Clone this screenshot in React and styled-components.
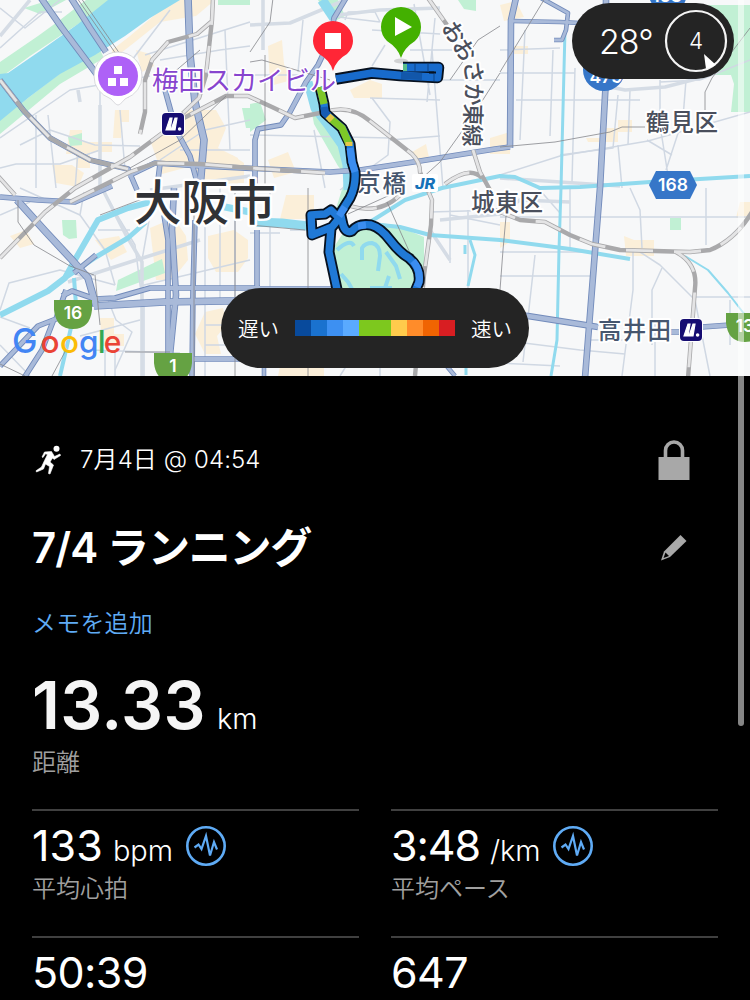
import React from 'react';
import styled, { createGlobalStyle } from 'styled-components';

const GlobalStyle = createGlobalStyle`
  html, body {
    margin: 0;
    background: #000;
  }

  * {
    box-sizing: border-box;
  }
`;

const Screen = styled.div`
  position: relative;
  width: 750px;
  height: 1000px;
  overflow: hidden;
  background: #000;
  color: #fff;
  font-family: Inter, "Noto Sans CJK JP", sans-serif;
`;

const MapArea = styled.div`
  position: relative;
  height: 376px;
  overflow: hidden;
`;

const MapSvg = styled.svg`
  display: block;
  width: 750px;
  height: 376px;
  font-family: "Noto Sans CJK JP", sans-serif;
`;

const Road = styled.path`
  fill: none;
  stroke: ${props => props.$color || '#d0d8e3'};
  stroke-width: ${props => props.$width || 2};
  stroke-dasharray: ${props => props.$dash || 'none'};
  stroke-linejoin: round;
`;

const Place = styled.text`
  fill: ${props => props.$color || '#4a4f5c'};
  font-size: ${props => props.$size || 23.5}px;
  font-weight: ${props => props.$weight || 500};
  paint-order: stroke;
  stroke: #fff;
  stroke-width: ${props => props.$halo || 4}px;
  stroke-linejoin: round;
`;

const ShieldText = styled.text`
  fill: #fff;
  font-family: Inter, sans-serif;
  font-size: 17.5px;
  font-weight: 600;
  text-anchor: middle;
`;

const GoogleText = styled.text`
  font-family: Inter, sans-serif;
  font-size: 31.5px;
  font-weight: 550;
`;

const JrText = styled.text`
  font-family: Inter, sans-serif;
  font-size: 14px;
  font-style: italic;
  font-weight: 800;
  fill: #1672b8;
`;

const Weather = styled.div`
  position: absolute;
  top: 3px;
  right: 16px;
  display: flex;
  align-items: center;
  justify-content: space-between;
  width: 162px;
  height: 76px;
  padding: 0 6px 0 27px;
  border-radius: 38px;
  background: #242424;
`;

const Temperature = styled.span`
  font-size: 34px;
  font-weight: 350;
  letter-spacing: -1px;
`;

const Wind = styled.svg`
  display: block;
  width: 64px;
  height: 64px;
`;

const Legend = styled.div`
  position: absolute;
  left: 221px;
  bottom: 8px;
  display: flex;
  align-items: center;
  justify-content: center;
  width: 308px;
  height: 80px;
  gap: 16px;
  border-radius: 40px;
  background: #242424;
  font-size: 20.5px;
  font-weight: 350;
`;

const Scale = styled.div`
  display: flex;
`;

const Swatch = styled.i`
  width: 16px;
  height: 16px;
  background: ${props => props.$color};
`;

const Details = styled.div`
  padding: 60px 32px 0;
`;

const Row = styled.div`
  display: flex;
  align-items: center;
  justify-content: space-between;
  height: ${props => props.$height}px;
  padding-right: 28px;
`;

const DateLine = styled.div`
  display: flex;
  align-items: center;
  gap: 16px;
  height: 46px;
  line-height: 24px;
  font-size: 24px;
  font-weight: 350;
  letter-spacing: 0.1px;
`;

const TitleRow = styled(Row)`
  margin-top: 34px;
`;

const Title = styled.h1`
  margin: 0;
  font-size: 42px;
  font-weight: 600;
  line-height: 60px;
  letter-spacing: -0.9px;

  > span {
    letter-spacing: -1.2px;
  }
`;

const Memo = styled.div`
  margin-top: 30px;
  line-height: 32px;
  font-size: 24px;
  font-weight: 350;
  letter-spacing: 0.2px;
  color: #5fabf5;
`;

const Distance = styled.div`
  display: flex;
  align-items: baseline;
  gap: 11px;
  height: 66px;
  margin-top: 32px;
  line-height: 66px;
  font-size: 66px;
  font-weight: 600;
  letter-spacing: 0.4px;
  color: #f5f5f5;
`;

const Unit = styled.span`
  font-size: 29px;
  font-weight: 350;
  line-height: 1;
  letter-spacing: -0.1px;
  color: #fff;
`;

const Label = styled.div`
  margin-top: ${props => props.$top}px;
  line-height: 32px;
  font-size: 24px;
  font-weight: 350;
  color: #a0a0a0;
`;

const Stats = styled.div`
  display: grid;
  grid-template-columns: 327px 327px;
  column-gap: 32px;
  grid-auto-rows: 127px;
  margin-top: 30px;
`;

const Stat = styled.div`
  padding-top: 13px;
  border-top: 2px solid #404040;
`;

const Value = styled.div`
  display: flex;
  align-items: baseline;
  gap: 10px;
  height: 44px;
  line-height: 43px;
  font-size: 43px;
  font-weight: 400;
  letter-spacing: ${props => props.$tracking || -0.6}px;
`;

const Pulse = styled.svg`
  align-self: center;
  width: 40px;
  height: 40px;
  margin-left: 3px;
`;

const ScrollBar = styled.div`
  position: absolute;
  top: -10px;
  right: 6px;
  width: 6px;
  height: 736px;
  border-radius: 3px;
  background: rgba(255, 255, 255, 0.52);
`;

const paceColors = [
  '#084a9c', '#1a72cf', '#3d90f2', '#5aaaff', '#7dc81e',
  '#7dc81e', '#ffcb4c', '#ff8c2a', '#f06402', '#d81e22'
];

const builtUp = [
  'M112 50L130 36L163 8L180 0H215L196 16L160 22L135 42L112 60z',
  'M70 130h12v12h30v10h-22v16h-14v-14h-10z',
  'M115 110h14v12h-8v16h-8z',
  'M150 140l40-30h26l10 18-8 20 20 10v26h-32l-14-18-30 8z',
  'M136 50l14 4 4 12-12 6z',
  'M52 165h20l12 8-6 14-22-4z',
  'M210 155h22l12 8v20h-30z',
  'M150 228l24-10 12 18 2 24-16 20h-16z',
  'M208 236l26-6 14 10v18l-10 14h-22l-8-14z',
  'M205 312l18-4 4 16-10 12 4 18h-16l-10-20z',
  'M100 318h14v16h10v12h-22z',
  'M95 240l24-4 8 16-16 8z',
  'M10 236l16-6 8 14-14 4z',
  'M268 46l14-6 2 24 8 16-22 6z',
  'M268 160l20-8 8 20-22 6z',
  'M286 195h28v24h-34z',
  'M350 90l20-10 12 4v14h-28z',
  'M412 152l14-8 4 18-14 2z',
  'M490 138l20-6v22h-20z',
  'M586 138h16l4-10h12v-8h14v12h-14v10h-30z',
  'M514 46h14v8h-18z',
  'M500 5l16-4 8 16-20 4z',
  'M624 236l10 4h20v16h-28z',
  'M740 202h10v16h-14z',
  'M500 222h10v20l-10 6z',
  'M280 366h44v10h-46z'
];

const parks = [
  'M0 62L38 36L60 20L86 0H116L72 28L30 56L0 78z',
  'M0 120L28 98L62 72L100 50L104 58L60 84L36 104L0 134z',
  'M24 8l26-8h16L40 14z',
  'M218 0h32v5h-32z',
  'M68 137l14-4v12l-12 1z',
  'M242 108h12v20h-8z',
  'M250 104l10-2 6 18-16 12z',
  'M318 0h20l7 16-12 6z',
  'M308 92l6-4 14 32 20 22v36l-10-12-24-42z',
  'M458 0h18v11l-12-2z',
  'M708 5h42v107h-19l3-28-3-9h-23z',
  'M670 218h11v12h-11z',
  'M62 220h14l1 18-8 1-6-4z',
  'M118 280l44-21 3 14-49 18z',
  'M345 180l10 0-6 30-16 8z',
  'M345 230L372 222L395 225L424 237V282L414 290H340L332 250z'
];

const minorRoads = [
  'M0 48L40 12H62M0 8L25 28L60 0M0 138L70 90L150 76M0 168L16 164H60L100 150V80M48 115L56 188',
  'M20 145L50 130L95 145L140 146M75 190L78 150M36 115V188M120 110L125 170M128 98L132 60L170 10',
  'M145 55L250 22M160 60L220 50L250 46M225 30L230 150M250 120L205 130L160 160M180 150H250',
  'M330 16L380 22M345 20L348 12H375L380 22M303 20L298 72M325 188L314 130M250 75H300',
  'M372 30L440 34M414 4L430 95M435 18L427 102M432 50L443 188M372 98L390 122L388 155L340 190',
  'M250 135L390 138M370 98L440 100M390 140L440 136M385 45L372 66M440 80H500M410 50H455',
  'M500 73H575M525 30L520 140M553 50L550 136M575 68L572 182M500 50L560 48M618 95L613 148L560 155',
  'M630 90L628 145M660 80V125L670 188M686 80L683 118L666 170M647 140L672 155M660 82L700 80',
  'M500 175L560 156L648 141L750 112M750 60L700 80M618 145L622 188',
  'M516 100H640M500 217H750M538 188L560 213M630 188L640 210L642 248M706 188V245',
  'M500 252L590 252M500 276L595 276M535 255L523 362M633 250V290L622 376M655 320V376M662 268L652 290V345',
  'M640 252L660 265L695 300L710 376M695 297H750M730 300V345M500 340L580 350L625 354',
  'M500 363L560 366M590 340H626M450 188V215L500 225M430 212L500 210M450 210V263M468 210V290',
  'M0 215L30 202M0 310L9 283L60 270L115 285M108 300L116 320L132 332L115 370M0 317L30 328',
  'M84 192L80 215L105 250L115 285M103 190L120 220L135 245L142 300M150 215L142 260M98 230H130',
  'M80 336L140 320M90 350L180 353M105 350V376M144 300V376M115 350L115 376M140 286L250 260',
  'M250 233H280M270 188V290M290 230H325M340 376L350 360M380 376V360M570 188V250',
  'M20 188L80 215M205 188V376M220 188V300M235 200V350M0 345L30 376M205 325H250M205 345H250'
];

const avenues = [
  'M30 0L0 36M250 25L290 23L345 0M263 0V50M100 105V190M150 190L250 176',
  'M330 16L380 10L440 8M102 188L126 235L142 262V376M68 282L130 262L200 240',
  'M600 85L625 90L665 87L700 78M500 178L620 186',
  'M440 220L500 214L520 200L570 202M430 230L450 260M78 90L80 102'
];

const water = [
  ['M0 315L48 291L65 278L76 258L98 220L128 208L150 202', 6],
  ['M62 280L96 257L128 238L146 222', 5],
  ['M74 278L76 305L66 350L60 376', 4],
  ['M250 222L282 223L308 226', 9],
  ['M340 228L372 224L400 227L430 235L500 240L570 249L630 259', 4],
  ['M370 222L405 200L442 188L500 176L515 177L540 188L580 187L650 182L750 176', 4],
  ['M565 30L561 188L559 250L557 340L551 376', 3],
  ['M685 256L708 270L728 293L745 315', 2],
  ['M470 240L475 255L468 286', 3],
  ['M465 245V254M466 375V355', 3],
  ['M322 0L334 18', 10],
  ['M308 82L315 108L328 125L342 145L347 165L348 190', 9],
  ['M220 206L250 212', 7]
];

const moats = [
  'M337 250Q350 238 354 246M362 260V248Q365 243 372 243Q380 245 380 256L378 271',
  'M386 252L396 266L400 279M389 276L385 288M341 274L348 282L352 289M392 288H370M402 252L405 260'
];

const highways = [
  ['M41 -2L62 28L98 76', 6],
  ['M71 -2L90 28L106 52', 6],
  ['M0 80L24 111L50 138L90 160L128 169L137 190', 5],
  ['M188 -2L190 55L195 102L204 140L200 188', 7],
  ['M165 90L176 130L190 156L197 182', 5],
  ['M160 164L157 188', 5],
  ['M128 176L155 163L200 166L330 172L360 170L420 161L495 149L510 147', 5],
  ['M346 -2L334 18L330 40L318 65L306 82L290 112L281 125L258 129L255 140V190', 5],
  ['M516 -2L511 20L510 148', 6],
  ['M512 21L560 22L580 23', 4],
  ['M541 -2L568 13L566 30L562 40H554', 4],
  ['M606 -2V78L600 188L585 378', 6],
  ['M0 197L38 200L75 202L112 186', 5],
  ['M17 200L45 231L72 260L88 278L96 306', 7],
  ['M74 273L96 255', 5],
  ['M62 296L72 291L95 299L115 298L150 288H260', 5],
  ['M94 306L164 302L225 301H260', 7],
  ['M66 290L56 319L38 326L0 366', 5],
  ['M54 319L42 350L24 378', 5],
  ['M164 215L168 240L168 355', 5],
  ['M174 188L172 230L176 295L170 355', 6],
  ['M195 220L193 290L192 378', 5],
  ['M190 359H260', 5],
  ['M257 230V290', 5],
  ['M264 360V378M440 358L455 376', 4],
  ['M500 314L528 316L598 327', 6],
  ['M670 332H682M702 327L730 325', 5],
  ['M250 288L340 288', 3]
];

const railways = [
  'M0 80L24 111L50 138L90 160L128 169',
  'M0 258L45 212L75 188L130 157L180 120L226 96H248L272 107L295 118L325 112Q350 104 370 121L412 154Q420 162 420 172L432 200L431 225L424 275L415 376',
  'M213 -2L212 20L206 75L199 98L182 114M211 22L197 34L168 42L152 60L145 80V112L140 134',
  'M-2 176L15 195M70 202L130 172L155 163L200 164L250 168L325 173',
  'M428 -2L447 25M473 150L480 172L490 190M445 184Q470 165 482 178',
  'M490 208L520 220L545 222L570 235L592 244L620 250L690 252L710 250Q735 240 752 212',
  'M676 252Q698 264 695 288L688 378',
  'M350 206Q380 215 400 195'
];

const thinLines = [
  'M77 -2L116 54M81 -2L120 54M200 50L165 80M226 96L180 140L130 168',
  'M273 -2L270 22L250 52M250 62L262 60L330 80M265 55V190',
  'M550 -10L500 72M500 73L470 120',
  'M750 28L712 78L705 92V118',
  'M500 147L555 142L610 132L622 127H645',
  'M500 26L478 40L450 80M470 120L440 162L420 180',
  'M18 200V222L34 245L70 266L94 275M100 215L150 196M235 188V376M194 188V376M0 364L25 376',
  'M308 188V376M387 202L414 262M250 225L305 230M348 214L390 195M507 205L503 250L500 290',
  'M95 275L100 325M66 350L52 376M125 352H170'
];

const route = 'M403 67.500H438.500L437.500 77.500L400 75.500L372 73L336 79';
const routeSouth = 'M320 87L324 104L325 113L342 128L350 144L352 162L355 172Q356 186 350 198L338 217L331 210L325 214L311 215L312 235L332 227L341 216L343 225Q346 234 352 231Q358 223 371 225Q381 228 390 240Q400 253 409 258Q421 268 419 282L414 294M331 228L329 252L338 294';

const MetroIcon = ({ x, y }) => (
  <g transform={`translate(${x} ${y})`}>
    <rect x="-1" y="-1" width="24" height="24" rx="5" fill="#fff" />
    <rect width="22" height="22" rx="4" fill="#160d72" />
    <path d="M4 17L8 5H10L8 17zM9 17L13 5H15L13 17z" fill="#fff" stroke="#fff" strokeWidth="1.2" />
    <circle cx="17.6" cy="16" r="1.8" fill="#fff" />
  </g>
);

const GreenShield = ({ x, y, label }) => (
  <g transform={`translate(${x} ${y})`}>
    <path d="M0 0H38V10Q36 29 19 29Q2 29 0 10z" fill="#65a243" />
    <ShieldText x="19" y="18.500">{label}</ShieldText>
  </g>
);

const CityMap = () => (
  <MapSvg viewBox="0 0 750 376">
    <defs>
      <path id="osakaHigashi" d="M441 27L461 60Q466 69 466 82L463 160" />
    </defs>
    <rect width="750" height="376" fill="#f7f8f9" />
    {builtUp.map(d => <path key={d} d={d} fill="#fbefd9" />)}
    {parks.map(d => <path key={d} d={d} fill="#c1f0d4" />)}
    <path d="M0 74L8 73L40 51L78 24L108 0H180L150 18L125 36L95 55L60 74L28 98L0 121z" fill="#90daee" />
    {minorRoads.map(d => <Road key={d} d={d} $width={1.5} />)}
    {avenues.map(d => <Road key={d} d={d} $width={3.6} $color="#d5dce5" />)}
    {water.map(([d, width]) => <Road key={d} d={d} $width={width} $color="#90daee" />)}
    {moats.map(d => <Road key={d} d={d} $width={4} $color="#90daee" />)}
    {highways.map(([d, width]) => <Road key={d} d={d} $width={width + 0.6} $color="#728bbb" />)}
    {highways.map(([d, width]) => <Road key={d} d={d} $width={width - 1.2} $color="#a9bad9" />)}
    {railways.map(d => <Road key={d} d={d} $width={4.4} $color="#a9a9ab" />)}
    {railways.map(d => <Road key={d} d={d} $width={2.8} $color="#e4e4e5" $dash="27 21" />)}
    {thinLines.map(d => <Road key={d} d={d} $width={0.8} $color="#85878b" />)}

    <Place x="134" y="220" $size={47.5} $color="#303236" $halo={5} textLength="142">大阪市</Place>
    <Place x="357" y="192" $color="#46566e" textLength="49">京橋</Place>
    <Place x="471" y="210.500" textLength="72">城東区</Place>
    <Place x="646" y="130.500" textLength="72">鶴見区</Place>
    <Place x="598" y="339" $color="#46566e" textLength="73">高井田</Place>
    <Place $size={22.5} textLength="126">
      <textPath href="#osakaHigashi">おおさか東線</textPath>
    </Place>

    <rect x="412" y="174" width="26" height="18" rx="2" fill="#fff" />
    <JrText x="415" y="189" textLength="20" lengthAdjust="spacingAndGlyphs">JR</JrText>

    <MetroIcon x={162} y={113} />
    <MetroIcon x={680} y={319} />

    <circle cx="604" cy="70" r="21" fill="#3676c8" />
    <ShieldText x="606" y="83">479</ShieldText>
    <path d="M649 185L656 171H690L697 185L690 199H656z" fill="#3676c8" />
    <ShieldText x="673" y="191">168</ShieldText>
    <path d="M645 -10H690L684 4H652z" fill="#3676c8" />
    <ShieldText x="667" y="2">163</ShieldText>
    <GreenShield x={54} y={300} label="16" />
    <GreenShield x={154} y={353} label="1" />
    <GreenShield x={726} y={313} label="13" />

    <Road d={route} $width={11.5} $color="#07111f" />
    <Road d={routeSouth} $width={11} $color="#07111f" />
    <Road d={route} $width={7.8} $color="#186bcc" />
    <Road d={routeSouth} $width={7.4} $color="#2079d6" />
    <Road d="M429 72.500H436" $width={2} $color="#07111f" />
    <Road d="M403 67.500H407" $width={7} $color="#58bd8a" />
    <Road d="M401 75.500L422 76.500" $width={7} $color="#1257aa" />
    <Road d="M428 64V71M434 74V81M415 64V71" $width={2} $color="#1257aa" />
    <Road d="M320 87L324 104M330 118L342 128L349 144" $width={7.4} $color="#7ec728" />
    <Road d="M324 107L325 113L329 116" $width={7.4} $color="#175bb4" />
    <Road d="M328 116L332 120M349 142V146" $width={7} $color="#e5c64b" />
    <Road d="M350 148L352 162L355 172M345 207L339 216M413 261Q421 270 419 282L417 287M358 226L366 225" $width={7} $color="#3b8df0" />

    <g>
      <path d="M118 105Q116 105 111 99Q94 92 94 76A24 24 0 0 1 142 76Q142 92 125 99Q120 105 118 105z" fill="#fff" stroke="#cfcfd4" strokeWidth="0.8" />
      <circle cx="118" cy="76" r="20" fill="#ae61f7" />
      <path d="M114 66h8v8h-8zM108 78h8v8h-8zM120 78h8v8h-8z" fill="#fff" />
    </g>
    <Place x="152" y="89.500" $size={26.5} $weight={400} $color="#8745ce" $halo={3} textLength="184">梅田スカイビル</Place>

    <path d="M333 71Q330 60 319 54Q313 48 313 41A20 20 0 0 1 353 41Q353 48 347 54Q336 60 333 71z" fill="#ff2636" />
    <rect x="325" y="33" width="16" height="16" fill="#fff" />
    <ellipse cx="401" cy="61" rx="7" ry="2.500" fill="#000" opacity="0.15" />
    <path d="M401 58Q398 48 387 41Q381 35 381 27A20 20 0 0 1 421 27Q421 35 415 41Q404 48 401 58z" fill="#43b000" />
    <path d="M395 17L412 27L395 36z" fill="#fff" />

    <GoogleText y="353">
      <tspan x="12" fontSize="34" fill="#4285f4">G</tspan>
      <tspan x="40.500" fill="#ea4335">o</tspan>
      <tspan x="60" fill="#fbbc05">o</tspan>
      <tspan x="79" fill="#4285f4">g</tspan>
      <tspan x="97.700" fill="#34a853">l</tspan>
      <tspan x="103.800" fontSize="30" fill="#ea4335">e</tspan>
    </GoogleText>
  </MapSvg>
);

const Runner = () => (
  <svg width="32" height="32" viewBox="0 0 32 32">
    <circle cx="24.500" cy="4.800" r="3" fill="#fff" />
    <path d="M12.500 8L19.500 7.500L22.500 12.500L28 10L28.500 11.500L22 15.500L20.500 14L18 18L21.500 21L18 30L16.500 29.500L17.500 22.500L13.500 20L11.500 25L4.500 28L4 26.800L9.500 23L12.500 16.500L15.500 10.500L13.500 9.800L11 13.500L10 13z" fill="#fff" stroke="#fff" strokeWidth="0.6" strokeLinejoin="round" />
  </svg>
);

const Lock = () => (
  <svg width="32" height="40" viewBox="0 0 32 40">
    <path d="M7.500 18V10.500A8.500 8.500 0 0 1 24.500 10.500V18" fill="none" stroke="#a8a8a8" strokeWidth="3.600" />
    <rect x="0.500" y="17" width="31" height="23" fill="#a8a8a8" />
  </svg>
);

const Pencil = () => (
  <svg width="32" height="32" viewBox="0 0 32 32">
    <path d="M22.500 3L28.500 9L12 25L3 28.500L6 19.500z" fill="#a8a8a8" />
    <path d="M7.500 20.500L11 24L5.500 26z" fill="#000" />
  </svg>
);

const PulseIcon = () => (
  <Pulse viewBox="0 0 40 40">
    <circle cx="20" cy="20" r="18.700" fill="none" stroke="#5fabf5" strokeWidth="2.600" />
    <path d="M8.500 21.500L12.500 18.500L15.500 23L20 10L24 29.500L28 16L31 23.500" fill="none" stroke="#5fabf5" strokeWidth="2.200" />
  </Pulse>
);

const stats = [
  { value: '133', unit: 'bpm', label: '平均心拍', tracking: 0.1, pulse: true },
  { value: '3:48', unit: '/km', label: '平均ペース', tracking: -1.1, pulse: true },
  { value: '50:39' },
  { value: '647' }
];

const App = () => (
  <Screen>
    <GlobalStyle />
    <MapArea>
      <CityMap />
      <Weather>
        <Temperature>28°</Temperature>
        <Wind viewBox="0 0 64 64">
          <circle cx="32" cy="32" r="30" fill="none" stroke="#f4f4f4" strokeWidth="2.200" />
          <text x="32" y="40" textAnchor="middle" fontSize="22.500" fontWeight="300" fill="#fff">4</text>
          <path d="M40 45L52 56L42 60z" fill="#fff" />
        </Wind>
      </Weather>
      <Legend>
        <span>遅い</span>
        <Scale>
          {paceColors.map((color, i) => <Swatch key={i} $color={color} />)}
        </Scale>
        <span>速い</span>
      </Legend>
    </MapArea>
    <Details>
      <Row $height={48}>
        <DateLine>
          <Runner />
          <span>7月4日 @ 04:54</span>
        </DateLine>
        <Lock />
      </Row>
      <TitleRow $height={60}>
        <Title>7/4 <span>ランニング</span></Title>
        <Pencil />
      </TitleRow>
      <Memo>メモを追加</Memo>
      <Distance>13.33<Unit>km</Unit></Distance>
      <Label $top={9}>距離</Label>
      <Stats>
        {stats.map(stat => (
          <Stat key={stat.value}>
            <Value $tracking={stat.tracking}>
              {stat.value}
              {stat.unit && <Unit>{stat.unit}</Unit>}
              {stat.pulse && <PulseIcon />}
            </Value>
            {stat.label && <Label $top={5}>{stat.label}</Label>}
          </Stat>
        ))}
      </Stats>
    </Details>
    <ScrollBar />
  </Screen>
);

export default App;
